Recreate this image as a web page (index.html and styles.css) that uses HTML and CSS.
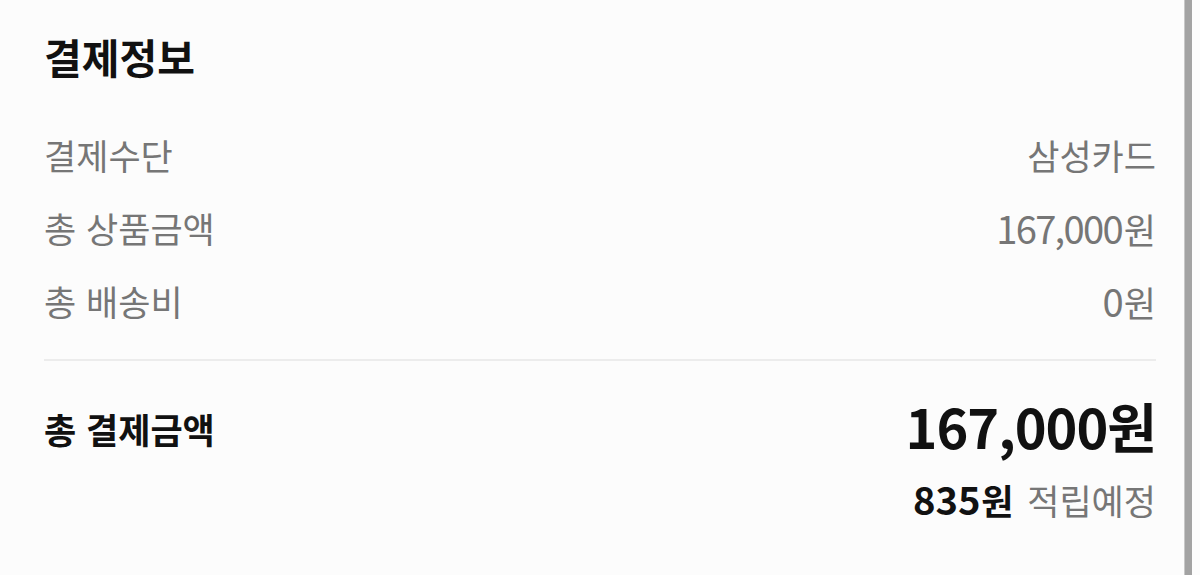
FILE: index.html
```html
<!DOCTYPE html>
<html lang="ko">
<head>
<meta charset="utf-8">
<link rel="stylesheet" href="styles.css">
</head>
<body>
<section class="pay">
  <h2 class="pay-title">결제정보</h2>
  <dl class="pay-rows">
    <div class="pay-row"><dt>결제수단</dt><dd>삼성카드</dd></div>
    <div class="pay-row"><dt>총 상품금액</dt><dd><span class="num">167,000</span>원</dd></div>
    <div class="pay-row"><dt>총 배송비</dt><dd><span class="num">0</span>원</dd></div>
  </dl>
  <hr class="pay-divider">
  <div class="pay-total">
    <div class="pay-total-label">총 결제금액</div>
    <div class="pay-total-values">
      <div class="pay-total-amount">167,000원</div>
      <div class="pay-point"><strong><span class="num num-bold">835</span>원</strong> 적립예정</div>
    </div>
  </div>
</section>
<div class="scrollbar"></div>
</body>
</html>
```

FILE: styles.css
```css
html, body {
  margin: 0;
  padding: 0;
  background: #fcfcfc;
  height: 100%;
  overflow: hidden;
}
body {
  font-family: "Noto Sans CJK KR", "Noto Sans", sans-serif;
  color: #111;
}
.pay {
  padding: 32px 44px 0 44px;
}
.pay-title {
  margin: 0;
  font-size: 41px;
  line-height: 48px;
  font-weight: 700;
  color: #111;
}
.pay-rows {
  margin: 38px 0 0 0;
  padding: 0;
}
.pay-row {
  display: flex;
  justify-content: space-between;
  align-items: center;
  height: 73px;
  font-size: 35px;
  color: #767676;
}
.pay-row dt, .pay-row dd {
  margin: 0;
  line-height: 73px;
}
.num {
  font-size: 1.09em;
  letter-spacing: -0.045em;
  margin-right: 0.05em;
}
.num-bold {
  letter-spacing: 0;
  margin-right: 0.02em;
}
.pay-divider {
  margin: 22px 0 0 0;
  border: 0;
  height: 2px;
  background: #ececec;
}
.pay-total {
  display: flex;
  justify-content: space-between;
  align-items: flex-start;
  margin-top: 38px;
}
.pay-total-label {
  font-size: 35px;
  line-height: 60px;
  font-weight: 700;
  color: #111;
}
.pay-total-values {
  display: flex;
  flex-direction: column;
  align-items: flex-end;
}
.pay-total-amount {
  font-size: 54px;
  line-height: 54px;
  font-weight: 700;
  letter-spacing: -1px;
  color: #111;
}
.pay-point {
  margin-top: 24px;
  font-size: 35px;
  line-height: 44px;
  color: #767676;
  white-space: nowrap;
}
.pay-point strong {
  font-weight: 700;
  color: #111;
  margin-right: 4px;
}
.scrollbar {
  position: fixed;
  top: 0;
  right: 8px;
  width: 8px;
  height: 100%;
  background: #a3a3a3;
  border-left: 1px solid #c8c8c8;
  box-sizing: border-box;
}
```
